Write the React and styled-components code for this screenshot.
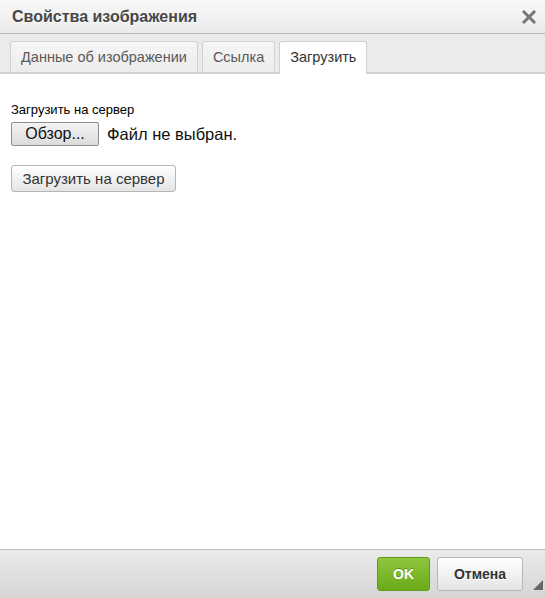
import React from "react";
import styled, { createGlobalStyle } from "styled-components";

const Global = createGlobalStyle`
  html, body { margin: 0; padding: 0; background: #fff; }
  body { font-family: "Liberation Sans", Arial, sans-serif; }
`;

const Dialog = styled.div`
  width: 545px;
  height: 598px;
  display: flex;
  flex-direction: column;
  background: #fff;
  overflow: hidden;
`;

const TitleBar = styled.div`
  height: 34px;
  flex: none;
  display: flex;
  align-items: center;
  justify-content: space-between;
  padding: 0 12px;
  box-sizing: border-box;
  background: linear-gradient(#f8f8f8, #ebebeb);
  border-bottom: 1px solid #b4b4b4;
  font-weight: bold;
  font-size: 16px;
  color: #474747;
  text-shadow: 0 1px 0 #fff;
`;

const Close = styled.div`
  width: 14px;
  height: 14px;
  display: flex;
  margin-right: -3px;
`;

const TabStrip = styled.div`
  flex: none;
  display: flex;
  align-items: flex-end;
  gap: 4px;
  height: 40px;
  padding: 7px 0 0 10px;
  box-sizing: border-box;
  background: #ebebeb;
  border-bottom: 2px solid #d1d1d1;
`;

const Tab = styled.div`
  box-sizing: border-box;
  display: flex;
  align-items: center;
  padding: 0 10px;
  border: 1px solid #d1d1d1;
  border-bottom: none;
  border-radius: 3px 3px 0 0;
  font-size: 14.5px;
  color: ${(p) => (p.$active ? "#333" : "#595959")};
  background: ${(p) => (p.$active ? "#fff" : "linear-gradient(#f6f6f6, #ececec)")};
  margin-bottom: ${(p) => (p.$active ? "-2px" : "0")};
  height: ${(p) => (p.$active ? "33px" : "31px")};
  padding-bottom: ${(p) => (p.$active ? "2px" : "0")};
`;

const Body = styled.div`
  flex: 1;
  padding: 28px 11px 0;
  display: flex;
  flex-direction: column;
  align-items: flex-start;
`;

const Label = styled.div`
  font-size: 13px;
  color: #000;
  line-height: 16px;
`;

const FileRow = styled.div`
  display: flex;
  align-items: center;
  gap: 8px;
  margin-top: 4px;
`;

const BrowseButton = styled.div`
  width: 88px;
  height: 24px;
  box-sizing: border-box;
  display: flex;
  align-items: center;
  justify-content: center;
  border: 1px solid #8e8e8e;
  border-radius: 2px;
  background: linear-gradient(#f3f3f3, #dcdcdc);
  font-size: 16px;
  color: #111;
`;

const FileText = styled.span`
  font-size: 16.5px;
  color: #111;
`;

const UploadButton = styled.div`
  margin-top: 19px;
  width: 165px;
  height: 27px;
  box-sizing: border-box;
  display: flex;
  align-items: center;
  justify-content: center;
  border: 1px solid #b6b6b6;
  border-radius: 3px;
  background: linear-gradient(#fff, #e4e4e4);
  font-size: 15px;
  color: #333;
`;

const Footer = styled.div`
  flex: none;
  height: 49px;
  box-sizing: border-box;
  border-top: 1px solid #bfbfbf;
  background: linear-gradient(#ebebeb, #d5d5d5);
  display: flex;
  justify-content: flex-end;
  align-items: flex-start;
  gap: 7px;
  padding: 7px 22px 0 0;
  position: relative;
`;

const FooterButton = styled.div`
  height: 34px;
  box-sizing: border-box;
  display: flex;
  align-items: center;
  justify-content: center;
  border-radius: 3px;
  font-weight: bold;
  font-size: 14px;
  width: ${(p) => p.$w}px;
  color: ${(p) => (p.$primary ? "#fff" : "#333")};
  border: 1px solid ${(p) => (p.$primary ? "#5f9b1a" : "#b6b6b6")};
  background: ${(p) =>
    p.$primary
      ? "linear-gradient(#8ec73f, #6aaa18)"
      : "linear-gradient(#fff, #e4e4e4)"};
  text-shadow: ${(p) => (p.$primary ? "0 -1px 0 #5a8f14" : "0 1px 0 #fff")};
`;

const Resizer = styled.div`
  position: absolute;
  right: 2px;
  bottom: 8px;
  width: 10px;
  height: 10px;
  display: flex;
`;

export default function App() {
  return (
    <>
      <Global />
      <Dialog>
        <TitleBar>
          <span>Свойства изображения</span>
          <Close>
            <svg width="14" height="14" viewBox="0 0 14 14">
              <path d="M2 2 L12 12 M12 2 L2 12" stroke="#777" strokeWidth="3" strokeLinecap="square" />
            </svg>
          </Close>
        </TitleBar>
        <TabStrip>
          <Tab>Данные об изображении</Tab>
          <Tab>Ссылка</Tab>
          <Tab $active>Загрузить</Tab>
        </TabStrip>
        <Body>
          <Label>Загрузить на сервер</Label>
          <FileRow>
            <BrowseButton>Обзор...</BrowseButton>
            <FileText>Файл не выбран.</FileText>
          </FileRow>
          <UploadButton>Загрузить на сервер</UploadButton>
        </Body>
        <Footer>
          <FooterButton $primary $w={53}>OK</FooterButton>
          <FooterButton $w={86}>Отмена</FooterButton>
          <Resizer>
            <svg width="10" height="10" viewBox="0 0 10 10">
              <path d="M10 0 L10 10 L0 10 Z" fill="#666" />
            </svg>
          </Resizer>
        </Footer>
      </Dialog>
    </>
  );
}
